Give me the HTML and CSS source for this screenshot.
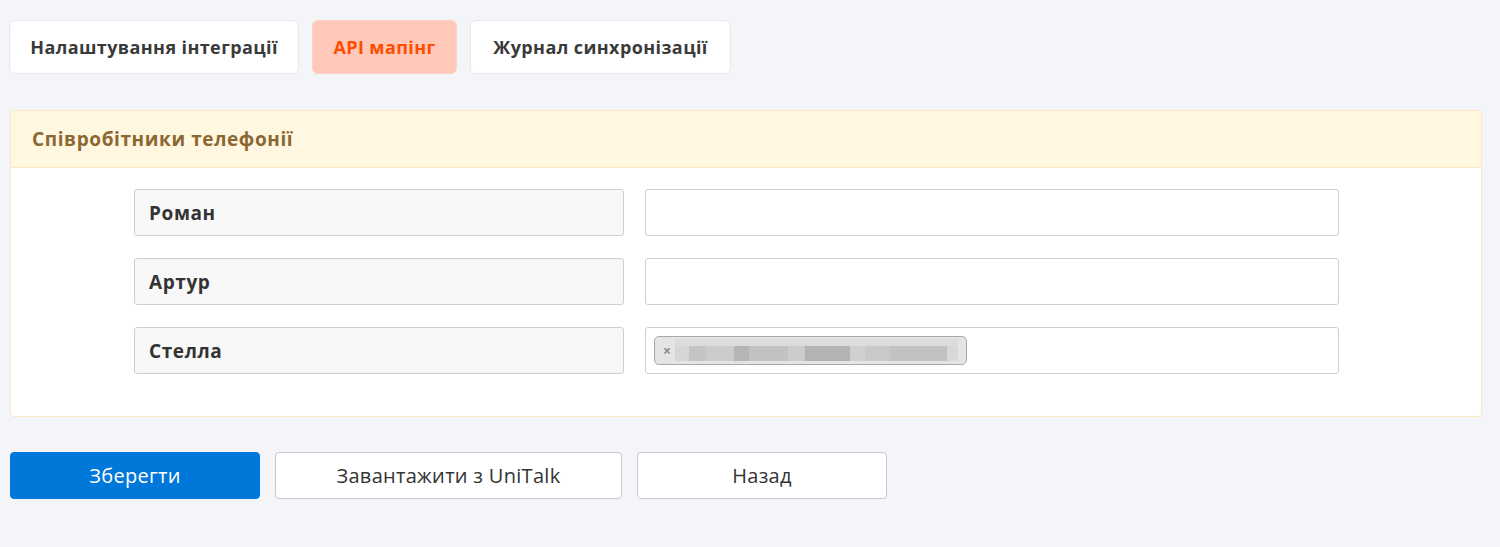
FILE: index.html
```html
<!DOCTYPE html>
<html lang="uk">
<head>
    <meta charset="UTF-8">
    <meta name="viewport" content="width=device-width, initial-scale=1.0">
    <title>API мапінг</title>
    <link rel="stylesheet" href="styles.css">
</head>
<body>
    <div class="page">
        <nav class="tabs">
            <a class="tab" href="#">Налаштування інтеграції</a>
            <a class="tab active" href="#">API мапінг</a>
            <a class="tab" href="#">Журнал синхронізації</a>
        </nav>

        <div class="panel">
            <div class="panel-header">Співробітники телефонії</div>
            <div class="panel-body">
                <div class="map-row">
                    <div class="map-label">Роман</div>
                    <div class="map-input"></div>
                </div>
                <div class="map-row">
                    <div class="map-label">Артур</div>
                    <div class="map-input"></div>
                </div>
                <div class="map-row">
                    <div class="map-label">Стелла</div>
                    <div class="map-input">
                        <span class="chip">
                            <span class="chip-remove">×</span>
                            <span class="chip-text"></span>
                        </span>
                    </div>
                </div>
            </div>
        </div>

        <div class="actions">
            <button class="btn btn-primary">Зберегти</button>
            <button class="btn btn-wide">Завантажити з UniTalk</button>
            <button class="btn">Назад</button>
        </div>
    </div>
</body>
</html>
```

FILE: styles.css
```css
body {
    margin: 0;
    background-color: #f4f5f9;
    font-family: "Open Sans", "Noto Sans", sans-serif;
    color: #333;
}

.page {
    padding: 20px 18px 40px 10px;
}

/* tabs */
.tabs {
    display: flex;
    gap: 13px;
    margin-left: -1px;
}

.tab {
    display: flex;
    align-items: center;
    justify-content: center;
    height: 52px;
    background-color: #fff;
    border: 1px solid #e8e9ee;
    border-radius: 6px;
    font-size: 18px;
    font-weight: 700;
    letter-spacing: 0.4px;
    color: #3a3a3a;
    text-decoration: none;
}

.tab:nth-child(1) { width: 288px; }
.tab:nth-child(2) { width: 143px; }
.tab:nth-child(3) { width: 259px; }

.tab.active {
    background-color: #ffc8b8;
    border-color: #fbd2c6;
    color: #ff4d00;
}

/* panel */
.panel {
    margin-top: 36px;
    background-color: #fff;
    border: 1px solid #fde7c3;
    border-radius: 4px;
}

.panel-header {
    height: 56px;
    display: flex;
    align-items: center;
    padding-left: 21px;
    background-color: #fff7e0;
    border-bottom: 1px solid #fde7c3;
    border-radius: 4px 4px 0 0;
    font-size: 19px;
    font-weight: 700;
    letter-spacing: 0.6px;
    color: #8b6832;
}

.panel-body {
    padding: 21px 0 42px 123px;
    display: flex;
    flex-direction: column;
    gap: 22px;
}

.map-row {
    display: flex;
    gap: 21px;
}

.map-label {
    box-sizing: border-box;
    width: 490px;
    height: 47px;
    display: flex;
    align-items: center;
    padding-left: 14px;
    background-color: #f8f8f8;
    border: 1px solid #cfcfcf;
    border-radius: 3px;
    font-size: 19px;
    font-weight: 700;
    letter-spacing: 0.6px;
    color: #333;
}

.map-input {
    box-sizing: border-box;
    width: 694px;
    height: 47px;
    display: flex;
    align-items: center;
    padding-left: 8px;
    background-color: #fff;
    border: 1px solid #cfcfcf;
    border-radius: 3px;
}

.chip {
    box-sizing: border-box;
    width: 313px;
    height: 29px;
    margin-top: -1px;
    display: flex;
    align-items: center;
    padding: 0 8px 0 8px;
    background-color: #e4e4e4;
    border: 1px solid #a9a9a9;
    border-radius: 5px;
}

.chip-remove {
    font-size: 14px;
    font-weight: 700;
    color: #888;
    margin-right: 4px;
}

/* name hidden behind a mosaic */
.chip-text {
    flex: 1;
    height: 22px;
    background:
        linear-gradient(90deg,
            #d6d6d6 0 5%, #c4c4c4 5% 11%, #cbcbcb 11% 21%, #b5b5b5 21% 26%,
            #c2c2c2 26% 40%, #cccccc 40% 46%, #b3b3b3 46% 62%, #d0d0d0 62% 67%,
            #c9c9c9 67% 76%, #c2c2c2 76% 96%, #d8d8d8 96% 100%);
    box-shadow: inset 0 7px 0 #dcdcdc;
}

/* bottom buttons */
.actions {
    display: flex;
    gap: 15px;
    margin-top: 35px;
}

.btn {
    box-sizing: border-box;
    width: 250px;
    height: 47px;
    background-color: #fff;
    border: 1px solid #c9c9cc;
    border-radius: 4px;
    font-family: "Open Sans", "Noto Sans", sans-serif;
    font-size: 20px;
    letter-spacing: 0.3px;
    color: #333;
}

.btn-wide {
    width: 347px;
}

.btn-primary {
    background-color: #0078d9;
    border-color: #0078d9;
    color: #fff;
}
```
